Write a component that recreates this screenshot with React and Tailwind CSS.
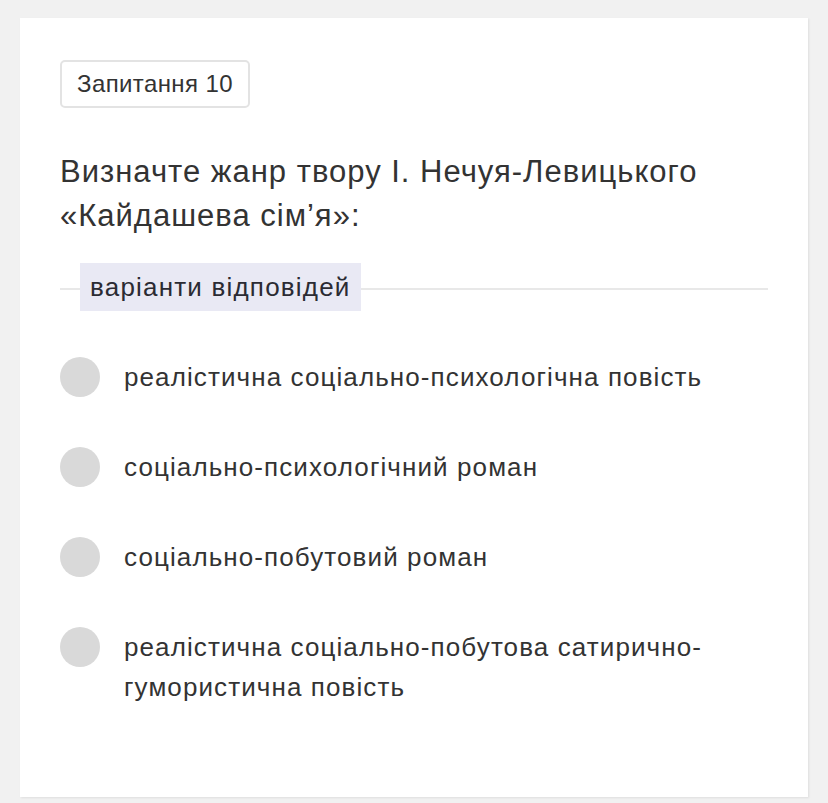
import React from 'react';

const options = [
  'реалістична соціально-психологічна повість',
  'соціально-психологічний роман',
  'соціально-побутовий роман',
  'реалістична соціально-побутова сатирично-гумористична повість',
];

const App = () => {
  return (
    <div className="min-h-[803px] bg-[#f1f1f1] pt-[18px] px-[20px] font-['Liberation_Sans',Arial,sans-serif]">
      <div className="bg-white h-[779px] px-[40px] pt-[42px] shadow-[1px_1px_2px_rgba(0,0,0,0.08)]">
        <div className="inline-flex items-center h-[48px] px-[15px] border-2 border-[#e3e3e3] rounded-[5px] text-[24px] tracking-[0.4px] text-[#333]">
          Запитання 10
        </div>

        <h2 className="mt-[42px] text-[31px] leading-[44px] tracking-[1px] text-[#333] font-normal">
          Визначте жанр твору І. Нечуя-Левицького
          <br />
          «Кайдашева сім’я»:
        </h2>

        <div className="mt-[25px] flex items-center">
          <div className="w-[20px] h-[2px] mt-[4px] bg-[#e8e8e8]" />
          <div className="bg-[#e9e9f4] h-[48px] px-[10px] flex items-center text-[26px] tracking-[1.2px] text-[#2b2b33]">
            варіанти відповідей
          </div>
          <div className="flex-1 h-[2px] mt-[4px] bg-[#e8e8e8]" />
        </div>

        <div className="mt-[46px] flex flex-col gap-[50px]">
          {options.map((opt, i) => (
            <label key={i} className="flex items-start gap-[24px] cursor-pointer">
              <span className="w-[40px] h-[40px] rounded-full bg-[#d9d9d9] shrink-0" />
              <span className="text-[26px] leading-[40px] tracking-[1.1px] text-[#333]">{opt}</span>
            </label>
          ))}
        </div>
      </div>
    </div>
  );
};

export default App;
